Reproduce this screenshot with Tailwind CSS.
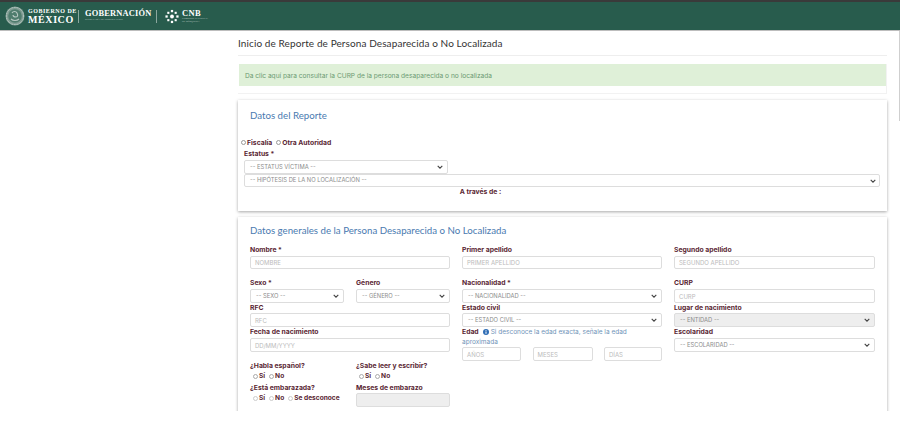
<!DOCTYPE html>
<html lang="es">
<head>
    <meta charset="UTF-8">
    <title>Inicio de Reporte de Persona Desaparecida o No Localizada</title>
    <script src="https://cdn.jsdelivr.net/npm/@tailwindcss/browser@4"></script>
</head>
<body class="relative bg-white overflow-hidden h-[422px] font-['Inter',sans-serif] text-[5.8px] text-[#8c8c8c]">
    <!-- barra superior -->
    <header class="h-[31px] bg-[#285c4d] border-t-2 border-t-[#3a3a3a] border-b border-b-[#bdbdbd] flex items-center pl-[5px] text-white">
        <svg class="w-[20px] h-[20px]" viewBox="0 0 20 20" fill="none">
            <circle cx="10" cy="10" r="9.5" fill="#7f9c92"/>
            <circle cx="10" cy="10" r="8.6" stroke="#c5d3ce" stroke-width="1" stroke-dasharray="1 0.7"/>
            <circle cx="10" cy="10" r="6.8" fill="#4f7c6d"/>
            <path d="M6 13c2 2 6 2 8 0M7 7c1-2 4-2 5 0s1 4-1 4-3-1-3-2" stroke="#b7c8c2" stroke-width="1.1"/>
        </svg>
        <div class="ml-[3px] w-[44px] font-['Liberation_Serif',serif] font-bold leading-none whitespace-nowrap">
            <div class="text-[6px] tracking-[0.55px]">GOBIERNO DE</div>
            <div class="text-[10px] tracking-[0.6px] mt-[1px]">MÉXICO</div>
        </div>
        <div class="w-px h-[13px] bg-[#8aa79e] ml-[6px]"></div>
        <div class="ml-[6px] w-[65px] font-['Liberation_Serif',serif] leading-none whitespace-nowrap">
            <div class="text-[8.4px] tracking-[0.2px] font-bold">GOBERNACIÓN</div>
            <div class="text-[2.5px] mt-[1px] text-[#cfdcd8]">SECRETARÍA DE GOBERNACIÓN</div>
        </div>
        <div class="w-px h-[13px] bg-[#8aa79e] ml-[6px]"></div>
        <svg class="w-[14px] h-[15px] ml-[8px]" viewBox="0 0 16 16" fill="#fff">
            <circle cx="8" cy="8" r="2.2"/>
            <rect x="6.7" y="0.5" width="2.6" height="2.6"/><rect x="6.7" y="12.9" width="2.6" height="2.6"/>
            <rect x="0.5" y="6.7" width="2.6" height="2.6"/><rect x="12.9" y="6.7" width="2.6" height="2.6"/>
            <rect x="2.6" y="2.6" width="2.4" height="2.4"/><rect x="11" y="2.6" width="2.4" height="2.4"/>
            <rect x="2.6" y="11" width="2.4" height="2.4"/><rect x="11" y="11" width="2.4" height="2.4"/>
        </svg>
        <div class="ml-[3px] font-['Liberation_Serif',serif] leading-none whitespace-nowrap">
            <div class="text-[8.5px] tracking-[0.3px] font-bold">CNB</div>
            <div class="text-[2.5px] mt-[1px] text-[#cfdcd8]">COMISIÓN NACIONAL<br>DE BÚSQUEDA</div>
        </div>
    </header>

    <main class="ml-[235px] w-[655px] h-[380px] overflow-hidden px-[3px]">
        <h1 class="font-['Lato',sans-serif] text-[10px] leading-[12px] tracking-[0.1px] text-[#333] pt-[6px] pb-[6px] border-b border-[#eee]">Inicio de Reporte de Persona Desaparecida o No Localizada</h1>

        <div class="mt-[8px] border-b border-r border-[#f2f2f2] pb-[7px] pl-px">
            <div class="h-[22px] bg-[#dff0d8] flex items-center pl-[6px] pt-[3px] text-[6.6px] text-[#6b9a72]">Da clic aquí para consultar la CURP de la persona desaparecida o no localizada</div>
        </div>

        <!-- datos del reporte -->
        <section class="mt-[6px] h-[111px] shadow-[0_1px_3px_rgba(0,0,0,0.35)] pt-[9px] pl-[6px] pr-[7px]">
            <h2 class="font-['Lato',sans-serif] text-[9.7px] leading-[12px] text-[#4a7ab0] pl-[6px]">Datos del Reporte</h2>
            <div class="mt-[17px] flex items-center text-[6.8px] leading-[9px] font-bold text-[#5a1f33] -ml-[3px]">
                <span class="w-[5px] h-[5px] rounded-full border border-[#999] mr-px"></span><span>Fiscalía</span>
                <span class="w-[5px] h-[5px] rounded-full border border-[#999] ml-[4px] mr-px"></span><span>Otra Autoridad</span>
            </div>
            <div class="mt-[2px] text-[6.8px] leading-[9px] font-bold text-[#5a1f33]">Estatus *</div>
            <div class="mt-[2px] w-[204px] h-[14px] border border-[#ddd] rounded-[2px] flex items-center justify-between pl-[5px] pr-[4px]">
                <span>-- ESTATUS VÍCTIMA --</span>
                <svg class="w-[6px] h-[4px]" viewBox="0 0 6 4"><path d="M0.7 0.8 3 3.2 5.3 0.8" fill="none" stroke="#444" stroke-width="1.1"/></svg>
            </div>
            <div class="w-[636px] h-[13px] border border-[#ddd] rounded-[2px] flex items-center justify-between pl-[5px] pr-[3px]">
                <span>-- HIPÓTESIS DE LA NO LOCALIZACIÓN --</span>
                <svg class="w-[6px] h-[4px]" viewBox="0 0 6 4"><path d="M0.7 0.8 3 3.2 5.3 0.8" fill="none" stroke="#444" stroke-width="1.1"/></svg>
            </div>
            <div class="w-[473px] text-center text-[6.8px] leading-[9px] font-bold text-[#5a1f33]">A través de :</div>
        </section>

        <!-- datos generales -->
        <section class="mt-[6px] h-[220px] shadow-[0_1px_3px_rgba(0,0,0,0.35)] pt-[7px] px-[12px]">
            <h2 class="font-['Lato',sans-serif] text-[9.7px] leading-[12px] text-[#4a7ab0]">Datos generales de la Persona Desaparecida o No Localizada</h2>
            <div class="mt-[9px] grid grid-cols-[200px_200px_201px] gap-x-[12px]">
                <!-- columna 1 -->
                <div>
                    <div class="text-[6.8px] leading-[9px] font-bold text-[#5a1f33]">Nombre *</div>
                    <div class="mt-[2px] h-[13px] border border-[#ddd] rounded-[2px] flex items-center px-[4px] text-[6px] text-[#bbb]">NOMBRE</div>
                    <div class="mt-[9px] grid grid-cols-2 gap-x-[12px]">
                        <div>
                            <div class="text-[6.8px] leading-[9px] font-bold text-[#5a1f33]">Sexo *</div>
                            <div class="mt-[2px] h-[14px] border border-[#ddd] rounded-[2px] flex items-center justify-between pl-[5px] pr-[4px]">
                                <span>-- SEXO --</span>
                                <svg class="w-[6px] h-[4px]" viewBox="0 0 6 4"><path d="M0.7 0.8 3 3.2 5.3 0.8" fill="none" stroke="#444" stroke-width="1.1"/></svg>
                            </div>
                        </div>
                        <div>
                            <div class="text-[6.8px] leading-[9px] font-bold text-[#5a1f33]">Género</div>
                            <div class="mt-[2px] h-[14px] border border-[#ddd] rounded-[2px] flex items-center justify-between pl-[5px] pr-[4px]">
                                <span>-- GÉNERO --</span>
                                <svg class="w-[6px] h-[4px]" viewBox="0 0 6 4"><path d="M0.7 0.8 3 3.2 5.3 0.8" fill="none" stroke="#444" stroke-width="1.1"/></svg>
                            </div>
                        </div>
                    </div>
                    <div class="text-[6.8px] leading-[9px] font-bold text-[#5a1f33]">RFC</div>
                    <div class="mt-[1px] h-[14px] border border-[#ddd] rounded-[2px] flex items-center px-[4px] text-[6px] text-[#bbb]">RFC</div>
                    <div class="text-[6.8px] leading-[10px] font-bold text-[#5a1f33]">Fecha de nacimiento</div>
                    <div class="mt-[1px] h-[14px] border border-[#ddd] rounded-[2px] flex items-center px-[4px] text-[6px] text-[#bbb]">DD/MM/YYYY</div>
                    <div class="mt-[9px] grid grid-cols-2 gap-x-[12px]">
                        <div>
                            <div class="text-[6.8px] leading-[9px] font-bold text-[#5a1f33]">¿Habla español?</div>
                            <div class="mt-[2px] pl-[3px] flex items-center text-[6.6px] leading-[9px] font-bold text-[#5a1f33]">
                                <span class="w-[5px] h-[5px] rounded-full border border-[#aaa] mr-px"></span>Sí
                                <span class="w-[5px] h-[5px] rounded-full border border-[#aaa] ml-[4px] mr-px"></span>No
                            </div>
                            <div class="mt-[2px] text-[6.8px] leading-[9px] font-bold text-[#5a1f33]">¿Está embarazada?</div>
                            <div class="mt-[2px] pl-[3px] flex items-center whitespace-nowrap text-[6.6px] leading-[9px] font-bold text-[#5a1f33]">
                                <span class="w-[5px] h-[5px] rounded-full border border-[#ccc] mr-px"></span>Sí
                                <span class="w-[5px] h-[5px] rounded-full border border-[#ccc] ml-[4px] mr-px"></span>No
                                <span class="w-[5px] h-[5px] rounded-full border border-[#ccc] ml-[4px] mr-px"></span>Se desconoce
                            </div>
                        </div>
                        <div>
                            <div class="text-[6.8px] leading-[9px] font-bold text-[#5a1f33]">¿Sabe leer y escribir?</div>
                            <div class="mt-[2px] pl-[3px] flex items-center text-[6.6px] leading-[9px] font-bold text-[#5a1f33]">
                                <span class="w-[5px] h-[5px] rounded-full border border-[#aaa] mr-px"></span>Sí
                                <span class="w-[5px] h-[5px] rounded-full border border-[#aaa] ml-[4px] mr-px"></span>No
                            </div>
                            <div class="mt-[2px] text-[6.8px] leading-[9px] font-bold text-[#5a1f33]">Meses de embarazo</div>
                            <div class="mt-[1px] h-[14px] border border-[#ddd] rounded-[2px] bg-[#eee]"></div>
                        </div>
                    </div>
                </div>
                <!-- columna 2 -->
                <div>
                    <div class="text-[6.8px] leading-[9px] font-bold text-[#5a1f33]">Primer apellido</div>
                    <div class="mt-[2px] h-[13px] border border-[#ddd] rounded-[2px] flex items-center px-[4px] text-[6px] text-[#bbb]">PRIMER APELLIDO</div>
                    <div class="mt-[9px] text-[6.8px] leading-[9px] font-bold text-[#5a1f33]">Nacionalidad *</div>
                    <div class="mt-[2px] h-[14px] border border-[#ddd] rounded-[2px] flex items-center justify-between pl-[5px] pr-[4px]">
                        <span>-- NACIONALIDAD --</span>
                        <svg class="w-[6px] h-[4px]" viewBox="0 0 6 4"><path d="M0.7 0.8 3 3.2 5.3 0.8" fill="none" stroke="#444" stroke-width="1.1"/></svg>
                    </div>
                    <div class="text-[6.8px] leading-[9px] font-bold text-[#5a1f33]">Estado civil</div>
                    <div class="mt-[1px] h-[14px] border border-[#ddd] rounded-[2px] flex items-center justify-between pl-[5px] pr-[4px]">
                        <span>-- ESTADO CIVIL --</span>
                        <svg class="w-[6px] h-[4px]" viewBox="0 0 6 4"><path d="M0.7 0.8 3 3.2 5.3 0.8" fill="none" stroke="#444" stroke-width="1.1"/></svg>
                    </div>
                    <div class="flex items-center h-[10px] text-[6.5px] leading-[10px] text-[#6f93b8] whitespace-nowrap">
                        <span class="text-[6.8px] mr-[4px] font-bold text-[#5a1f33]">Edad</span>
                        <svg class="w-[6px] h-[6px] mr-[2px]" viewBox="0 0 12 12"><circle cx="6" cy="6" r="6" fill="#2f6db5"/><rect x="5" y="5" width="2" height="4.5" fill="#fff"/><rect x="5" y="2.5" width="2" height="1.6" fill="#fff"/></svg>
                        <span>Si desconoce la edad exacta, señale la edad</span>
                    </div>
                    <div class="text-[6.5px] leading-[10px] text-[#6f93b8]">aproximada</div>
                    <div class="grid grid-cols-[59px_60px_58px] justify-between">
                        <div class="h-[14px] border border-[#ddd] rounded-[2px] flex items-center px-[4px] text-[6px] text-[#bbb]">AÑOS</div>
                        <div class="h-[14px] border border-[#ddd] rounded-[2px] flex items-center px-[4px] text-[6px] text-[#bbb]">MESES</div>
                        <div class="h-[14px] border border-[#ddd] rounded-[2px] flex items-center px-[4px] text-[6px] text-[#bbb]">DÍAS</div>
                    </div>
                </div>
                <!-- columna 3 -->
                <div>
                    <div class="text-[6.8px] leading-[9px] font-bold text-[#5a1f33]">Segundo apellido</div>
                    <div class="mt-[2px] h-[13px] border border-[#ddd] rounded-[2px] flex items-center px-[4px] text-[6px] text-[#bbb]">SEGUNDO APELLIDO</div>
                    <div class="mt-[9px] text-[6.8px] leading-[9px] font-bold text-[#5a1f33]">CURP</div>
                    <div class="mt-[2px] h-[14px] border border-[#ddd] rounded-[2px] flex items-center px-[4px] text-[6px] text-[#bbb]">CURP</div>
                    <div class="text-[6.8px] leading-[9px] font-bold text-[#5a1f33]">Lugar de nacimiento</div>
                    <div class="mt-[1px] h-[14px] border border-[#ddd] rounded-[2px] bg-[#eee] flex items-center justify-between pl-[5px] pr-[4px]">
                        <span>-- ENTIDAD --</span>
                        <svg class="w-[6px] h-[4px]" viewBox="0 0 6 4"><path d="M0.7 0.8 3 3.2 5.3 0.8" fill="none" stroke="#444" stroke-width="1.1"/></svg>
                    </div>
                    <div class="text-[6.8px] leading-[10px] font-bold text-[#5a1f33]">Escolaridad</div>
                    <div class="mt-[1px] h-[14px] border border-[#ddd] rounded-[2px] flex items-center justify-between pl-[5px] pr-[4px]">
                        <span>-- ESCOLARIDAD --</span>
                        <svg class="w-[6px] h-[4px]" viewBox="0 0 6 4"><path d="M0.7 0.8 3 3.2 5.3 0.8" fill="none" stroke="#444" stroke-width="1.1"/></svg>
                    </div>
                </div>
            </div>
        </section>
    </main>

    <!-- barra de desplazamiento -->
    <div class="absolute right-0 top-[31px] w-px h-[90px] bg-[#cfcfcf]"></div>
</body>
</html>
